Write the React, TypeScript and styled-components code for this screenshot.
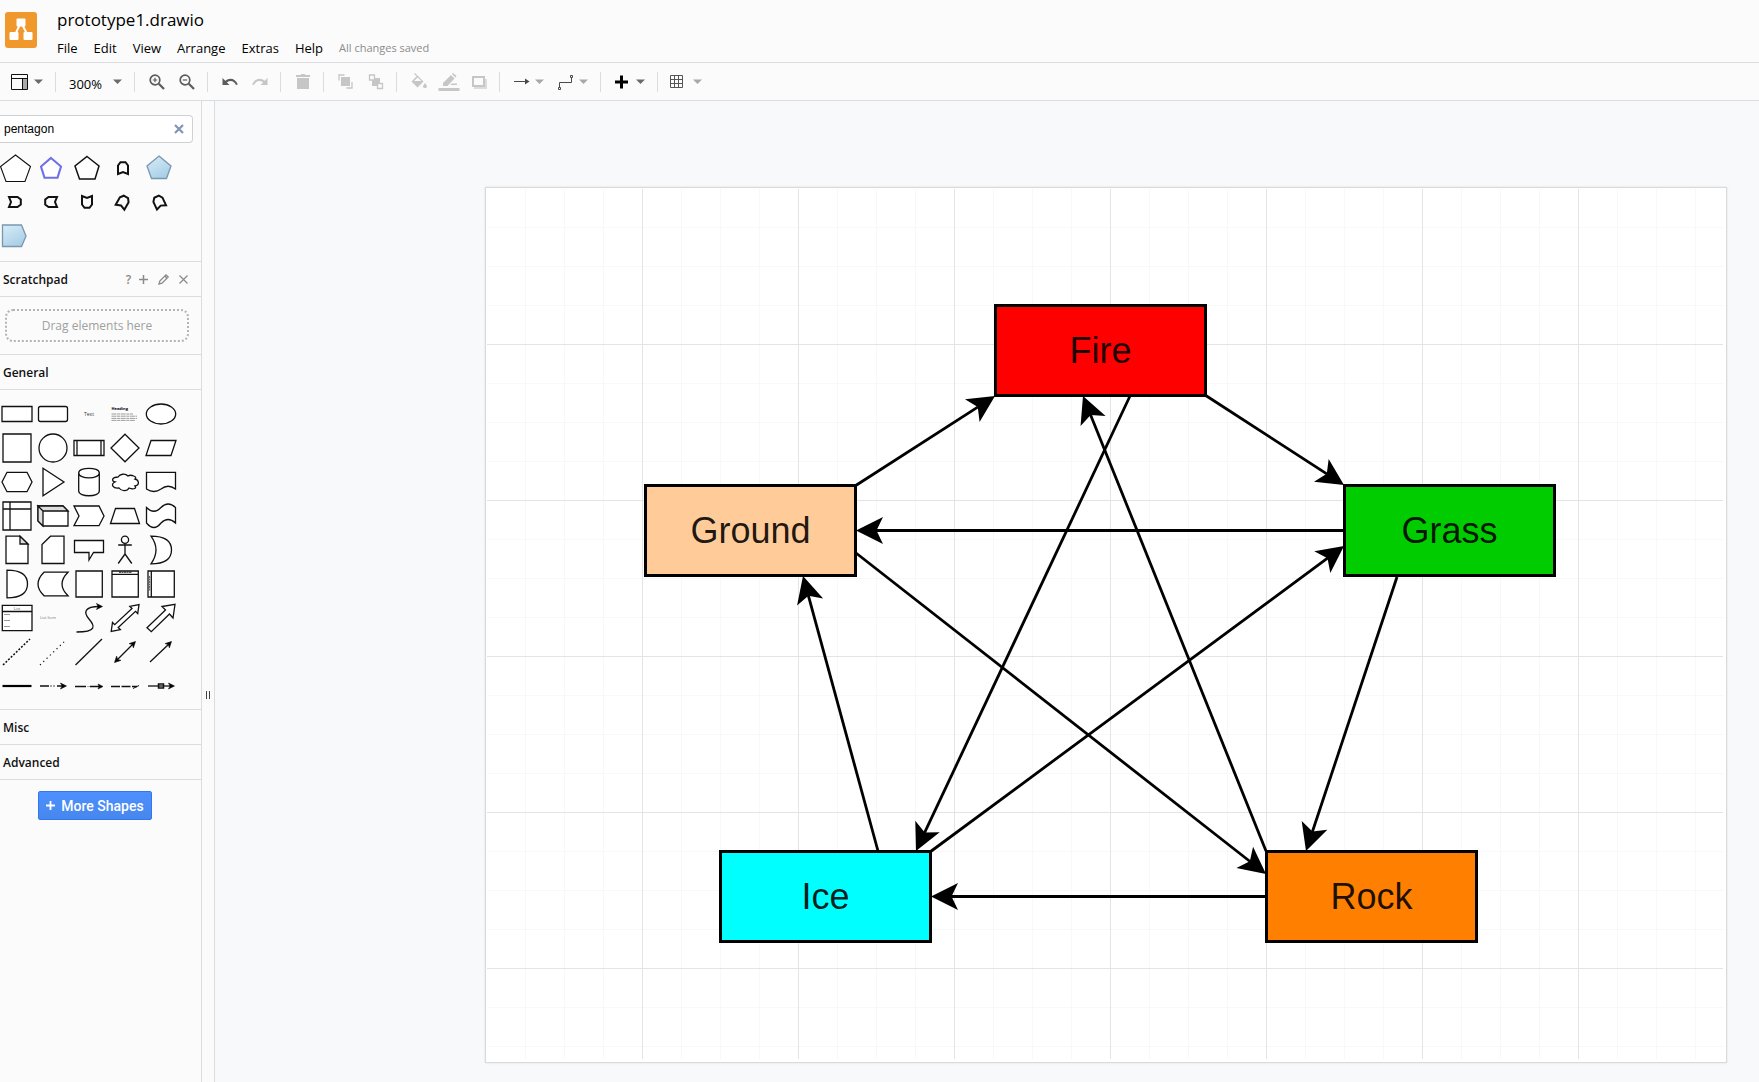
import React from "react";
import styled, { createGlobalStyle } from "styled-components";

const ui = `"Open Sans", "Noto Sans", sans-serif`;
const plain = `"Liberation Sans", Arial, sans-serif`;
const line = "#dadce0";

const GlobalStyle = createGlobalStyle`
  * { box-sizing: border-box; }
  body { margin: 0; background: #fbfbfb; font-family: ${ui}; color: #000; }
  button { font: inherit; color: inherit; background: none; border: 0; padding: 0; cursor: pointer; }
  svg { display: block; overflow: visible; flex: none; }
`;

/* ---------- frame ---------- */

const Shell = styled.div`
  display: flex;
  flex-direction: column;
  min-height: 100vh;
`;

const Header = styled.header`
  display: flex;
  gap: 20px;
  height: 63px;
  padding: 8px 5px 0;
  border-bottom: 1px solid ${line};
`;

const Logo = styled.div`
  width: 32px;
  height: 36px;
  margin-top: 4px;
  border-radius: 3px;
  background: #f0982c;
`;

const Heading = styled.div`
  display: flex;
  flex-direction: column;
  gap: 5px;
`;

const FileName = styled.h1`
  margin: 0;
  font-size: 17px;
  line-height: 24px;
  font-weight: 400;
`;

const MenuBar = styled.nav`
  display: flex;
  align-items: center;
  gap: 16px;
  font-size: 13px;
  line-height: 22px;
`;

const Status = styled.span`
  font-size: 11px;
  color: #8c8c8c;
`;

const Toolbar = styled.div`
  display: flex;
  align-items: center;
  height: 38px;
  border-bottom: 1px solid ${line};
`;

const Group = styled.div`
  display: flex;
  align-items: center;
  height: 20px;
  padding: 0 6px;
  border-right: 1px solid ${line};
  &:first-child { padding-left: 5px; }
  &:last-child { border-right: 0; }
`;

const IconButton = styled.button`
  display: flex;
  align-items: center;
  justify-content: center;
  width: 30px;
  height: 20px;
  padding-left: 2px;
`;

const DropButton = styled.button<{ $wide?: boolean }>`
  display: flex;
  align-items: center;
  gap: ${(p) => (p.$wide ? "8px" : "4px")};
  width: ${(p) => (p.$wide ? "66px" : "44px")};
  height: 20px;
  padding-left: 7px;
  font-size: 13px;
`;

const ZoomText = styled.span`
  width: 36px;
  padding-top: 4px;
  line-height: 18px;
  text-align: left;
`;

const Body = styled.div`
  display: flex;
  flex: 1;
`;

/* ---------- sidebar ---------- */

const Sidebar = styled.aside`
  width: 202px;
  flex: none;
  overflow: hidden;
  border-right: 1px solid ${line};
`;

const Search = styled.div`
  display: flex;
  align-items: center;
  width: 193px;
  height: 28px;
  margin: 14px 0 8px;
  padding-right: 8px;
  background: #fff;
  border: 1px solid #cfd1d4;
  border-left: 0;
  border-radius: 0 4px 4px 0;
`;

const SearchInput = styled.input`
  flex: 1;
  min-width: 0;
  padding: 0 4px;
  border: 0;
  outline: 0;
  background: none;
  font: 12px ${plain};
  color: #000;
`;

const Results = styled.div`
  padding-bottom: 8px;
`;

const Palette = styled.div<{ $shift: number }>`
  display: grid;
  grid-template-columns: repeat(5, 36px);
  grid-auto-rows: 34px;
  margin-left: -${(p) => p.$shift}px;
`;

const SectionTitle = styled.h2`
  display: flex;
  align-items: center;
  justify-content: space-between;
  height: 35px;
  margin: 0;
  padding: 0 10px 0 3px;
  border-top: 1px solid ${line};
  font-size: 12px;
  font-weight: 600;
  color: #111;
`;

const TitleTools = styled.span`
  display: flex;
  align-items: center;
  color: #8a8a8a;
`;

const SmallButton = styled.button<{ $w: number }>`
  display: flex;
  align-items: center;
  justify-content: center;
  width: ${(p) => p.$w}px;
  height: 16px;
`;

const SectionBody = styled.div<{ $pad: string }>`
  padding: ${(p) => p.$pad};
  border-top: 1px solid ${line};
`;

const DropZone = styled.div`
  height: 33px;
  border: 2px dotted #b4b4b4;
  border-radius: 8px;
  text-align: center;
  font-size: 12px;
  line-height: 30px;
  color: #a0a0a0;
`;

const MoreShapes = styled.button`
  display: flex;
  align-items: center;
  justify-content: center;
  gap: 6px;
  width: 114px;
  height: 29px;
  margin-left: 38px;
  border: 1px solid #3079ed;
  border-radius: 2px;
  background: linear-gradient(#4d90fe, #4787ed);
  color: #fff;
  font: 500 14px Roboto, sans-serif;
`;

const Splitter = styled.div`
  display: flex;
  justify-content: center;
  align-items: flex-start;
  width: 13px;
  flex: none;
  padding-top: 590px;
  border-right: 1px solid ${line};
`;

const Defs = styled.svg`
  position: absolute;
`;

/* ---------- canvas ---------- */

const Canvas = styled.main`
  display: flex;
  flex: 1;
  min-width: 0;
  padding: 86px 32px 19px 270px;
  background: #f8f9fb;
`;

const Paper = styled.div`
  display: flex;
  flex: 1;
  padding: 1px 3px 3px 1px;
  background: #fff;
  border: 1px solid #d8dadc;
  box-shadow: 0 0 2px #dcdee0;
`;

const Grid = styled.div`
  position: relative;
  flex: 1;
  background-image:
    linear-gradient(to left, #e4e4e4 1px, transparent 1px),
    linear-gradient(to top, #e4e4e4 1px, transparent 1px),
    linear-gradient(to left, #f8f8f8 1px, transparent 1px),
    linear-gradient(to top, #f8f8f8 1px, transparent 1px);
  background-size: 156px 156px, 156px 156px, 39px 39px, 39px 39px;
`;

const Links = styled.svg`
  position: absolute;
  inset: 0;
  width: 100%;
  height: 100%;
`;

const Node = styled.div<{ $x: number; $y: number; $fill: string }>`
  position: absolute;
  left: ${(p) => p.$x}px;
  top: ${(p) => p.$y}px;
  display: flex;
  align-items: center;
  justify-content: center;
  width: 213px;
  height: 93px;
  border: 3px solid #000;
  background: ${(p) => p.$fill};
  font: 36px ${plain};
  color: rgba(0, 0, 0, 0.88);
`;

const nodes = [
  { label: "Fire", x: 507, y: 115, fill: "#ff0000" },
  { label: "Ground", x: 157, y: 295, fill: "#ffcc99" },
  { label: "Grass", x: 856, y: 295, fill: "#00cc00" },
  { label: "Ice", x: 232, y: 661, fill: "#00ffff" },
  { label: "Rock", x: 778, y: 661, fill: "#ff8000" },
];

const links = [
  [368, 297, 508, 207],
  [718, 206, 857, 296],
  [857, 341.5, 369, 341.5],
  [643, 207, 429, 662],
  [779, 662, 596, 207],
  [369, 364, 779, 685],
  [443, 663, 857, 357],
  [910, 388, 819, 662],
  [778, 707.5, 444, 707.5],
  [391, 662, 316, 387],
];

function Link({ ends }: { ends: number[] }) {
  const [x1, y1, x2, y2] = ends;
  const len = Math.hypot(x2 - x1, y2 - y1);
  const deg = (Math.atan2(y2 - y1, x2 - x1) * 180) / Math.PI;
  return (
    <g transform={`translate(${x1} ${y1}) rotate(${deg})`}>
      <path d={`M0 0H${len - 15}`} stroke="#000" strokeWidth="2.8" />
      <path d={`M${len} 0l-27 -13.5l6.5 13.5l-6.5 13.5z`} />
    </g>
  );
}

/* ---------- icons ---------- */

const Caret = ({ color = "#6b6b6b" }: { color?: string }) => (
  <svg width="9" height="5" fill={color}><path d="M0 0.5h9L4.5 5z" /></svg>
);

const Icon = ({ children, color = "#666", fill }: { children: React.ReactNode; color?: string; fill?: boolean }) => (
  <svg width="18" height="18" viewBox="0 0 18 18" fill={fill ? color : "none"} stroke={fill ? "none" : color} strokeWidth="1">
    {children}
  </svg>
);

const light = "#c6c6c6";

function Magnifier({ plus }: { plus?: boolean }) {
  return (
    <Icon color="#5c5c5c">
      <circle cx="7" cy="7" r="4.8" strokeWidth="1.7" />
      <path d="M10.8 10.8L16 16" strokeWidth="2.2" />
      <path d={plus ? "M4.8 7h4.4M7 4.8v4.4" : "M4.8 7h4.4"} strokeWidth="1.2" />
    </Icon>
  );
}

const S = ({ children, label, w = 1.3 }: { children: React.ReactNode; label: string; w?: number }) => (
  <button aria-label={label}>
    <svg width="36" height="34" viewBox="-18 -17 36 34" fill="none" stroke="#111" strokeWidth={w}>
      {children}
    </svg>
  </button>
);

const tip = "l-6 -3l1.6 3l-1.6 3z";
const tag = "M-6 -5H2.5L5.8 -2.5V2.5L2.5 5H-6L-4 0Z";

const pentagons = (
  <>
    <S label="Pentagon" w={1.1}><path fill="#fff" d="M0.5 -13L15.5 -1.5L10 13.5H-9L-14.5 -1.5Z" /></S>
    <S label="Pentagon outline" w={2.1}><path fill="#fff" stroke="#6f6fe6" d="M0 -10L10 -1.5L6.5 9.7H-6.5L-10 -1.5Z" /></S>
    <S label="Regular pentagon" w={1.5}><path fill="#fff" d="M0 -11.5L12 -2L8 11H-7.5L-12 -2Z" /></S>
    <S label="Tag up" w={2}><path d={tag} transform="rotate(-90)" /></S>
    <S label="Shaded pentagon"><path fill="url(#blue)" stroke="#7a97b0" d="M0 -12L12 -2L7.5 10.5H-7.5L-12 -2Z" /></S>
    <S label="Tag right" w={2}><path d={tag} /></S>
    <S label="Tag left" w={2}><path d={tag} transform="rotate(180)" /></S>
    <S label="Tag down" w={2}><path d={tag} transform="rotate(90)" /></S>
    <S label="Tag tilted" w={2}><path d={tag} transform="rotate(-60)" /></S>
    <S label="Tag slanted" w={2}><path d={tag} transform="rotate(-115)" /></S>
    <S label="Shaded tag"><path fill="url(#blue)" stroke="#7a97b0" d="M-12.5 -11H6.5L11 0L6.5 10.5H-12.5Z" /></S>
  </>
);

const general = (
  <>
    <S label="Rectangle"><path fill="#fff" d="M-15 -7.5H15V7.5H-15Z" /></S>
    <S label="Rounded rectangle"><rect fill="#fff" x="-14.5" y="-7.5" width="29" height="15" rx="2" /></S>
    <S label="Text"><text x="0" y="2" fontSize="5" textAnchor="middle" fill="#333" stroke="none">Text</text></S>
    <S label="Textbox">
      <text x="-13.5" y="-4" fontSize="4" fontWeight="700" fill="#000" stroke="none">Heading</text>
      <path stroke="#777" strokeWidth="0.7" strokeDasharray="5 0.6 3 0.6" d="M-13.5 0H8M-13.5 2.2H12M-13.5 4.4H12M-13.5 6.4H10" />
    </S>
    <S label="Ellipse"><ellipse fill="#fff" rx="14.7" ry="10" /></S>

    <S label="Square" w={1.3}><path fill="#fff" d="M-14 -14H14V14H-14Z" /></S>
    <S label="Circle"><circle fill="#fff" r="14" /></S>
    <S label="Process"><path fill="#fff" d="M-15 -7.5H15V7.5H-15ZM-12 -7.5V7.5M12 -7.5V7.5" /></S>
    <S label="Diamond"><path fill="#fff" d="M0 -13.8L14 0L0 13.8L-14 0Z" /></S>
    <S label="Parallelogram"><path fill="#fff" d="M-10 -7.5H15L10 7.5H-15Z" /></S>

    <S label="Hexagon"><path fill="#fff" d="M-15 0L-10 -9.7H10L15 0L10 9.7H-10Z" /></S>
    <S label="Triangle"><path fill="#fff" d="M-10 -13.8L11 0L-10 13.8Z" /></S>
    <S label="Cylinder"><path fill="#fff" d="M-10.3 -9C-10.3 -15.3 10.3 -15.3 10.3 -9V9C10.3 15.3 -10.3 15.3 -10.3 9ZM-10.3 -9C-10.3 -2.4 10.3 -2.4 10.3 -9" /></S>
    <S label="Cloud"><path fill="#fff" d="M-7 -5C-13 -5 -14 -1 -10 0C-15 2 -12 7 -6 6C-4 9 2 10 4 6C9 8 12 6 10 4C15 3 14 -2 10 -3C13 -5 6 -8 3 -6C0 -9 -5 -8 -7 -5Z" /></S>
    <S label="Document"><path fill="#fff" d="M-14.5 -9.7H14.5V7Q7 1.5 0 7Q-7 12 -14.5 7Z" /></S>

    <S label="Internal storage" w={1.3}><path fill="#fff" d="M-14 -14H14V14H-14ZM-7 -14V14M-14 -7H14" /></S>
    <S label="Cube" w={1.3}><path fill="#fff" d="M-15 -10H10L15 -5V10H-10L-15 5Z" /><path fill="#ddd" d="M-15 -10H10L15 -5H-10ZM-15 -10L-10 -5V10L-15 5Z" /></S>
    <S label="Step"><path fill="#fff" d="M-15 -10H10L15 0L10 9.7H-15L-10 0Z" /></S>
    <S label="Trapezoid"><path fill="#fff" d="M-9.5 -7.5H9.5L14.5 7.5H-14.5Z" /></S>
    <S label="Tape"><path fill="#fff" d="M-14.5 -8.5Q-7 -1 0 -8.5Q7 -15.5 14.5 -8.5V7Q7 0 0 7Q-7 16 -14.5 7Z" /></S>

    <S label="Note"><path fill="#fff" d="M-11 -13.8H3L11 -6V13.5H-11Z" /><path fill="#ddd" d="M3 -13.8V-6H11Z" /></S>
    <S label="Card"><path fill="#fff" d="M-2.5 -13.8H11V13.5H-11V-5.5Z" /></S>
    <S label="Callout"><path fill="#fff" d="M-14.5 -9.5H14.5V2.5H4.5L0 10V2.5H-14.5Z" /></S>
    <S label="Actor"><circle fill="#fff" cy="-10.3" r="3.6" /><path d="M0 -6.7V4M-6.8 -5H6.8M0 4L-6.8 13.5M0 4L6.8 13.5" /></S>
    <S label="Or"><path fill="#fff" d="M-10 -13.8Q10.5 -13.8 10.5 0Q10.5 13.8 -10 13.8Q0 0 -10 -13.8Z" /></S>

    <S label="And"><path fill="#fff" d="M-10 -13.8Q10.5 -13.8 10.5 0Q10.5 13.8 -10 13.8Z" /></S>
    <S label="Data storage"><path fill="#fff" d="M-9 -11.8H15Q3 0 15 11.8H-9Q-21 0 -9 -11.8Z" /></S>
    <S label="Container"><path fill="#fff" d="M-13 -13H13.3V13H-13Z" /></S>
    <S label="Vertical container"><path fill="#fff" d="M-13 -13H13.3V13H-13ZM-13 -9.7H13.3" /><path strokeWidth="1" strokeDasharray="2 0.5" d="M-6 -11.8H7" /></S>
    <S label="Horizontal container"><path fill="#fff" d="M-13 -13H13.3V13H-13ZM-9.7 -13V13" /><path strokeWidth="0.7" strokeDasharray="2 0.5" d="M-11.4 -8V7" /></S>

    <S label="List" w={1.3}>
      <path fill="#fff" d="M-14.7 -12.6H15V12.6H-14.7ZM-14.7 -6.5H15" />
      <text x="0" y="-8.5" fontSize="4" textAnchor="middle" fill="#555" stroke="none">List</text>
      <path stroke="#999" strokeWidth="1" d="M-13 -3.5h6M-13 2.5h6M-13 8.5h6" />
    </S>
    <S label="List item"><text x="-13" y="1" fontSize="4" fill="#777" stroke="none">List Item</text></S>
    <S label="Curve"><path d="M-12.5 14C8 14 6 8 0 1S-4 -11.5 10 -11.5" /><path fill="#000" strokeWidth="0.6" d={`M13.5 -11.5${tip}`} /></S>
    <S label="Bidirectional arrow" w={1.3}><path fill="#fff" d="M-13.8 13.5L-12.5 4.5L-10.3 6.7L7 -9.5L4.8 -11.7L14 -13.5L12.7 -4.5L10.5 -6.7L-6.800 9.500L-4.600 11.700Z" /></S>
    <S label="Arrow shape" w={1.3}><path fill="#fff" d="M-14 9.7L4.5 -8L1 -11.5L14 -13.7L12 0L8.5 -4L-9.7 13.7Z" /></S>

    <S label="Dashed line" w={1.5}><path strokeDasharray="2 1.6" d="M-14 13L13 -13" /></S>
    <S label="Dotted line" w={1.2}><path strokeDasharray="1.2 3.4" d="M-13 13L13 -12" /></S>
    <S label="Line"><path d="M-13.5 13L13 -13" /></S>
    <S label="Bidirectional connector"><path d="M-9 9L9 -9" /><g fill="#000" strokeWidth="0.6"><path transform="translate(10.5 -10.5) rotate(-45)" d={`M0 0${tip}`} /><path transform="translate(-10.5 10.5) rotate(135)" d={`M0 0${tip}`} /></g></S>
    <S label="Directional connector"><path d="M-11 10L9 -9" /><path fill="#000" strokeWidth="0.6" transform="translate(10.5 -10.5) rotate(-45)" d={`M0 0${tip}`} /></S>

    <S label="Link" w={2.2}><path stroke="#000" d="M-14.5 0H14.5" /></S>
    <S label="Connector with label"><path d="M-13 0H-4M4 0H10" /><path stroke="#888" d="M-3 0H3" strokeDasharray="2 1" /><path fill="#000" strokeWidth="0.6" d={`M13.5 0${tip}`} /></S>
    <S label="Connector with two labels"><path d="M-14 0.5H-3M1 0.5H10" /><path stroke="#999" strokeWidth="0.8" d="M-2 0.5H1" /><path fill="#000" strokeWidth="0.6" d={`M14 0.5l-5 -2.500l1.200 2.500l-1.200 2.500z`} /></S>
    <S label="Connector with three labels"><path strokeDasharray="9 1.5" d="M-14 0.5H12" /><path strokeWidth="1" d="M8 2.5L14 -0.500" /></S>
    <S label="Connector with symbol"><path d="M-13 0H10" /><path fill="#fff" strokeWidth="1.5" d="M-2.5 -2H2.5V2H-2.5Z" /><path d="M-2 0H2" /><path fill="#000" strokeWidth="0.6" d={`M13.5 0${tip}`} /></S>
  </>
);

export default function App() {
  return (
    <Shell>
      <GlobalStyle />
      <Header>
        <Logo>
          <svg width="32" height="36" viewBox="0 0 32 36">
            <path d="M16 10L9.5 24M16 10L23 24" stroke="#fff" strokeWidth="2" />
            <g fill="#fff">
              <rect x="11.5" y="6.5" width="9" height="8" rx="1" />
              <rect x="4.5" y="20" width="9" height="8" rx="1" />
              <rect x="18.5" y="20" width="9" height="8" rx="1" />
            </g>
          </svg>
        </Logo>
        <Heading>
          <FileName>prototype1.drawio</FileName>
          <MenuBar>
            {["File", "Edit", "View", "Arrange", "Extras", "Help"].map((m) => (
              <button key={m}>{m}</button>
            ))}
            <Status>All changes saved</Status>
          </MenuBar>
        </Heading>
      </Header>

      <Toolbar>
        <Group>
          <DropButton aria-label="View">
            <Icon color="#111">
              <path fill="#aaa" stroke="none" d="M10 5h6v11h-6z" />
              <path d="M-0.5 1.5h16v15h-16zM-0.5 5.5h16M10.5 5.5v11" />
            </Icon>
            <Caret />
          </DropButton>
        </Group>
        <Group>
          <DropButton $wide><ZoomText>300%</ZoomText><Caret /></DropButton>
        </Group>
        <Group>
          <IconButton aria-label="Zoom in"><Magnifier plus /></IconButton>
          <IconButton aria-label="Zoom out"><Magnifier /></IconButton>
        </Group>
        <Group>
          <IconButton aria-label="Undo">
            <Icon color="#5c5c5c" fill><path d="M1.5 5v7h7l-2.600-2.600C9 7 13 7.500 15 12l1.800-.6C14.500 5.500 8.500 4 4.300 7.800z" /></Icon>
          </IconButton>
          <IconButton aria-label="Redo">
            <Icon color={light} fill><path d="M16.500 5v7h-7l2.600-2.600C9 7 5 7.500 3 12l-1.800-.6C3.500 5.500 9.500 4 13.700 7.800z" /></Icon>
          </IconButton>
        </Group>
        <Group>
          <IconButton aria-label="Delete">
            <Icon color={light} fill><path d="M2 2h4.500l1-1h3l1 1H16v2H2zM3 5h12v11H3z" /></Icon>
          </IconButton>
        </Group>
        <Group>
          <IconButton aria-label="To front">
            <Icon color={light}><path fill={light} stroke="none" d="M4 4h9v9H4z" /><path d="M2 7.500V2H7.500M9.500 15H15V9" strokeWidth="1.3" /></Icon>
          </IconButton>
          <IconButton aria-label="To back">
            <Icon color={light}><path fill={light} stroke="none" d="M5 5h8v8H5z" /><path fill="#fbfbfb" strokeWidth="1.3" d="M2.500 2h5v5h-5zM10.500 10.500h5v5h-5z" /></Icon>
          </IconButton>
        </Group>
        <Group>
          <IconButton aria-label="Fill colour">
            <Icon color={light} fill><path d="M5 0l8.500 8.500-6 6L1.500 8.500 6.700 3.300 4 1zM7.700 4.500L4 8h7.300zM15 10q4 5 0 5t0-5" fillRule="evenodd" /></Icon>
          </IconButton>
          <IconButton aria-label="Line colour">
            <Icon color={light} fill><path d="M3 10l8-8 3.500 3.500-7 7.500H3zM12 1l1-1 3.500 3-1 1.500zM-1.500 15h21v3h-21zM10 12l2-1.500h5V12z" /></Icon>
          </IconButton>
          <IconButton aria-label="Shadow">
            <Icon color={light}><path fill="#dcdcdc" stroke="none" d="M4 6h13v10H4z" /><path fill="#fbfbfb" strokeWidth="2" d="M3 4h11v9H3z" /></Icon>
          </IconButton>
        </Group>
        <Group>
          <DropButton aria-label="Connection">
            <Icon color="#4a4a4a"><path d="M1 8.500h13" /><path fill="#4a4a4a" stroke="none" d="M12 5.500l4.500 3-4.500 3z" /></Icon>
            <Caret color="#a8a8a8" />
          </DropButton>
          <DropButton aria-label="Waypoints">
            <Icon color="#4a4a4a"><path d="M2.500 14v-4.500h12V4.500M1.500 14.500h2v2h-2zM13.500 2.500h2v2h-2z" /></Icon>
            <Caret color="#a8a8a8" />
          </DropButton>
        </Group>
        <Group>
          <DropButton aria-label="Insert">
            <Icon color="#000"><path d="M1 9h13M7.500 2.500v13" strokeWidth="3" /></Icon>
            <Caret />
          </DropButton>
        </Group>
        <Group>
          <DropButton aria-label="Table">
            <Icon color="#555"><path d="M-0.500 2.500h12v12h-12zM-0.500 6.500h12M-0.500 10.500h12M3.500 2.500v12M7.500 2.500v12" /></Icon>
            <Caret color="#a8a8a8" />
          </DropButton>
        </Group>
      </Toolbar>

      <Body>
        <Sidebar>
          <Defs width="0" height="0">
            <defs>
              <linearGradient id="blue" x1="0" y1="0" x2="0.6" y2="1">
                <stop offset="0" stopColor="#d8edf8" />
                <stop offset="1" stopColor="#a9cfe6" />
              </linearGradient>
            </defs>
          </Defs>
          <Search>
            <SearchInput type="text" aria-label="Search shapes" defaultValue="pentagon" />
            <SmallButton $w={10} aria-label="Clear search">
              <svg width="8" height="8" stroke="#8095b3" strokeWidth="2.2"><path d="M0 0l8 8M8 0L0 8" /></svg>
            </SmallButton>
          </Search>
          <Results>
            <Palette $shift={3}>{pentagons}</Palette>
          </Results>

          <SectionTitle>
            Scratchpad
            <TitleTools>
              <SmallButton $w={15} aria-label="Help">?</SmallButton>
              <SmallButton $w={15} aria-label="Add">
                <svg width="9" height="9" stroke="currentColor" strokeWidth="1.5"><path d="M0 4.500h9M4.500 0v9" /></svg>
              </SmallButton>
              <SmallButton $w={24} aria-label="Edit">
                <svg width="11" height="11" fill="none" stroke="currentColor" strokeWidth="1.3"><path d="M1 10l.8-3L8 .8l2.200 2.200L4 9.200zM6.800 2l2.200 2.200" /></svg>
              </SmallButton>
              <SmallButton $w={16} aria-label="Close">
                <svg width="9" height="9" stroke="currentColor" strokeWidth="1.2"><path d="M.5.5l8 8M8.500.5l-8 8" /></svg>
              </SmallButton>
            </TitleTools>
          </SectionTitle>
          <SectionBody $pad="12px 12px 12px 5px">
            <DropZone>Drag elements here</DropZone>
          </SectionBody>

          <SectionTitle>General</SectionTitle>
          <SectionBody $pad="7px 0 6px">
            <Palette $shift={1}>{general}</Palette>
          </SectionBody>

          <SectionTitle>Misc</SectionTitle>
          <SectionTitle>Advanced</SectionTitle>
          <SectionBody $pad="11px 0">
            <MoreShapes>
              <svg width="9" height="9" stroke="#fff" strokeWidth="1.8"><path d="M0 4.500h9M4.500 0v9" /></svg>
              More Shapes
            </MoreShapes>
          </SectionBody>
        </Sidebar>

        <Splitter>
          <svg width="4" height="8" stroke="#444"><path d="M.5 0v8M3.500 0v8" /></svg>
        </Splitter>

        <Canvas>
          <Paper>
            <Grid>
              {nodes.map((n) => (
                <Node key={n.label} $x={n.x} $y={n.y} $fill={n.fill}>{n.label}</Node>
              ))}
              <Links>
                {links.map((l, i) => (
                  <Link key={i} ends={l} />
                ))}
              </Links>
            </Grid>
          </Paper>
        </Canvas>
      </Body>
    </Shell>
  );
}
